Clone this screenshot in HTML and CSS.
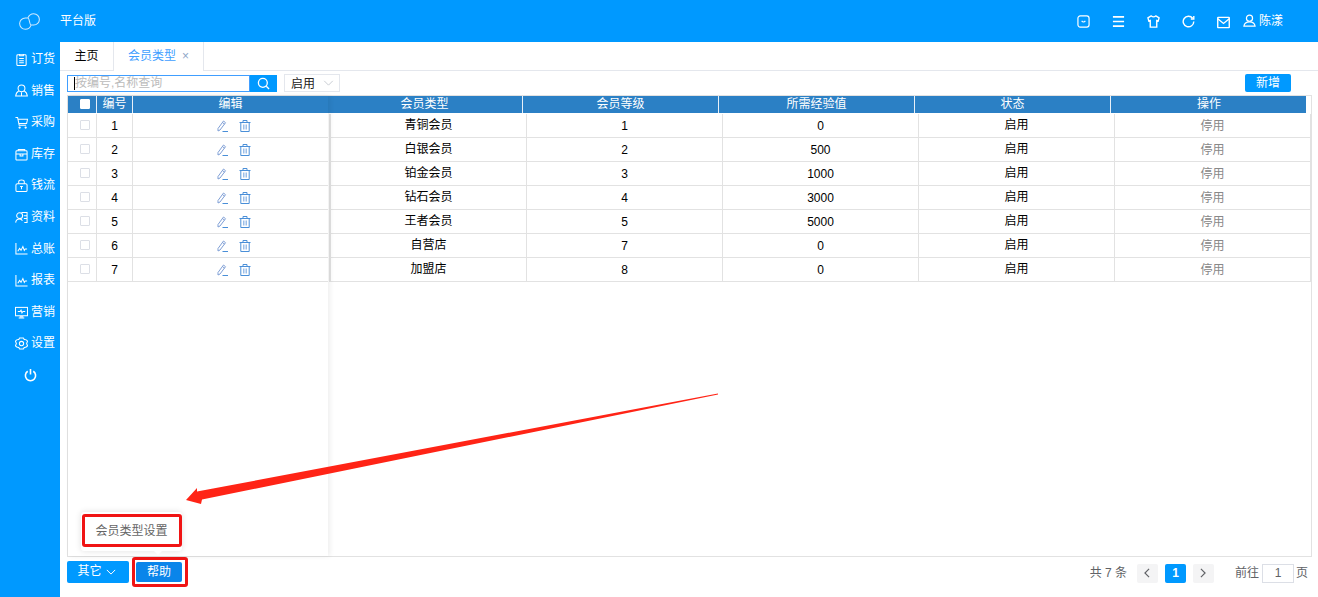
FILE: index.html
```html
<!DOCTYPE html>
<html lang="zh">
<head>
<meta charset="utf-8">
<title>会员类型</title>
<link rel="stylesheet" href="styles.css">
</head>
<body>
<div class="app">
  <header class="topbar">
    <svg class="logo" viewBox="0 0 20 16" fill="none" stroke="currentColor" stroke-width="1"><path d="M8.500 4.600 C9.500 2 11.500 0.600 14 0.600 A5.400 5.400 0 0 1 14 11.400 H11.500 C10.500 14 8.500 15.400 6 15.400 A5.400 5.400 0 0 1 6 4.600 H8.500 C10 4.600 10 11.400 11.500 11.400"/></svg>
    <span class="brand">平台版</span>
    <div class="top-actions">
      <svg class="top-icon" viewBox="0 0 14 14" fill="none" stroke="currentColor" stroke-width="1.300"><rect x="1" y="1" width="12" height="12" rx="2.500"/><path d="M5 6.300 Q7 8.800 9 6.300"/></svg>
      <svg class="top-icon" viewBox="0 0 14 14" fill="none" stroke="currentColor" stroke-width="1.700"><path d="M1 2H13M1 7H13M1 12H13"/></svg>
      <svg class="top-icon" viewBox="0 0 14 14" fill="none" stroke="currentColor" stroke-width="1.500"><path d="M4.500 1 Q7 3 9.500 1 L13 3 L12 6.500 L10.500 6 V13 H3.500 V6 L2 6.500 L1 3 Z"/></svg>
      <svg class="top-icon" viewBox="0 0 14 14" fill="none" stroke="currentColor" stroke-width="1.500"><path d="M11.500 3.500 A5.700 5.700 0 1 0 12.700 7"/><path d="M9.500 4.300 H12.700 V1" /></svg>
      <svg class="top-icon mail" viewBox="0 0 14 14" fill="none" stroke="currentColor" stroke-width="1.500"><rect x="0.800" y="1.500" width="12.400" height="11" rx="0.500"/><path d="M0.800 3 L7 8 L13.200 3"/></svg>
      <span class="user">
        <svg class="user-icon" viewBox="0 0 14 14" fill="none" stroke="currentColor" stroke-width="1.300"><circle cx="7" cy="4.500" r="3.300"/><path d="M1 13 C1.500 9.500 4 8.500 7 8.500 C10 8.500 12.500 9.500 13 13 Z"/></svg>
        <span>陈漾</span>
      </span>
    </div>
  </header>

  <div class="workspace">
    <nav class="sidebar">
      <a class="nav-item"><svg class="nav-icon" viewBox="0 0 14 14" fill="none" stroke="currentColor"><rect x="2" y="2" width="10" height="11.500" rx="1"/><path d="M5 1V3H9V1M4.500 6H9.500M4.500 8.300H9.500M4.500 10.600H9.500"/></svg><span>订货</span></a>
      <a class="nav-item"><svg class="nav-icon" viewBox="0 0 14 14" fill="none" stroke="currentColor"><circle cx="7" cy="4.700" r="3.700"/><path d="M4 7.500 C2 8.500 1 10.500 0.700 13 H13.300 C13 10.500 12 8.500 10 7.500M7 9V13"/></svg><span>销售</span></a>
      <a class="nav-item"><svg class="nav-icon" viewBox="0 0 14 14" fill="none" stroke="currentColor"><path d="M0.500 1.500 H2.800 L4.500 10 H12"/><path d="M3.200 3.500 H13.500 L12.500 8 H4.200"/><circle cx="5" cy="12.500" r="0.700"/><circle cx="11.500" cy="12.500" r="0.700"/></svg><span>采购</span></a>
      <a class="nav-item"><svg class="nav-icon" viewBox="0 0 14 14" fill="none" stroke="currentColor"><rect x="1" y="3" width="12" height="10" rx="1"/><path d="M1 6.500H13M3.500 3V1.500H10.500V3M5.500 6.500V8.500H8.500V6.500"/></svg><span>库存</span></a>
      <a class="nav-item"><svg class="nav-icon" viewBox="0 0 14 14" fill="none" stroke="currentColor"><rect x="1" y="5" width="12" height="8.500" rx="1.500"/><path d="M4 5V3 Q4 1 7 1 Q10 1 10 3V5"/><path d="M7 8V11M5.500 8H8.500"/></svg><span>钱流</span></a>
      <a class="nav-item"><svg class="nav-icon" viewBox="0 0 14 14" fill="none" stroke="currentColor"><circle cx="5" cy="5" r="3.200"/><path d="M0.700 12.500 C1 9.500 3 8.500 5 8.500 C6.500 8.500 7.500 9.300 8 10.500M7 1.500H13V12.500H10M9.500 5H13M9.500 8H13"/></svg><span>资料</span></a>
      <a class="nav-item"><svg class="nav-icon" viewBox="0 0 14 14" fill="none" stroke="currentColor"><path d="M1 1V13H13.500"/><path d="M3 10 L5 7 L6.500 9 L8.500 5 L10 9 L11 7.500 H13"/></svg><span>总账</span></a>
      <a class="nav-item"><svg class="nav-icon" viewBox="0 0 14 14" fill="none" stroke="currentColor"><path d="M1 1V13H13.500"/><path d="M3 10 L5 7 L6.500 9 L8.500 5 L10 9 L11 7.500 H13"/></svg><span>报表</span></a>
      <a class="nav-item"><svg class="nav-icon" viewBox="0 0 14 14" fill="none" stroke="currentColor"><rect x="0.500" y="1.500" width="13" height="9"/><path d="M3 6 H5.500 L6.500 4.500 L7.500 7.500 L8.500 6 H11M4 13H10M5 11.500H9"/></svg><span>营销</span></a>
      <a class="nav-item"><svg class="nav-icon" viewBox="0 0 14 14" fill="none" stroke="currentColor"><path d="M5 1 H9 L10 2.800 Q12 2.500 13.500 4.500 L12.500 7 L13.500 9.500 Q12 11.500 10 11.200 L9 13 H5 L4 11.200 Q2 11.500 0.500 9.500 L1.500 7 L0.500 4.500 Q2 2.500 4 2.800 Z"/><circle cx="7" cy="7" r="2.300"/></svg><span>设置</span></a>
      <a class="nav-item nav-power"><svg class="power-icon" viewBox="0 0 14 14" fill="none" stroke="currentColor" stroke-width="1.700"><path d="M4 3 A5.500 5.500 0 1 0 10 3M7 0.500V6.500"/></svg></a>
    </nav>

    <main class="main">
      <div class="tabs">
        <div class="tab">主页</div>
        <div class="tab tab-active">会员类型<span class="tab-close">×</span></div>
      </div>

      <div class="toolbar">
        <div class="search">
          <div class="search-input"><span class="caret"></span>按编号,名称查询</div>
          <button class="search-btn"><svg class="search-icon" viewBox="0 0 14 14" fill="none" stroke="currentColor" stroke-width="1.400"><circle cx="6.300" cy="6.300" r="4.800"/><path d="M10 10 L13 13"/></svg></button>
        </div>
        <div class="select">启用<svg class="select-arrow" viewBox="0 0 12 7" fill="none" stroke="currentColor"><path d="M1 1 L6 6 L11 1"/></svg></div>
        <button class="add-btn">新增</button>
      </div>

      <div class="table">
        <div class="fixed-pane">
          <div class="fixed-row head">
            <div class="cell check-cell"><span class="check check-head"></span></div>
            <div class="cell">编号</div>
            <div class="cell">编辑</div>
          </div>
          <div class="fixed-row"><div class="cell check-cell"><span class="check"></span></div><div class="cell num-cell">1</div><div class="cell edit-cell"><svg class="op-icon"><use href="#pen"/></svg><svg class="op-icon"><use href="#bin"/></svg></div></div>
          <div class="fixed-row"><div class="cell check-cell"><span class="check"></span></div><div class="cell num-cell">2</div><div class="cell edit-cell"><svg class="op-icon"><use href="#pen"/></svg><svg class="op-icon"><use href="#bin"/></svg></div></div>
          <div class="fixed-row"><div class="cell check-cell"><span class="check"></span></div><div class="cell num-cell">3</div><div class="cell edit-cell"><svg class="op-icon"><use href="#pen"/></svg><svg class="op-icon"><use href="#bin"/></svg></div></div>
          <div class="fixed-row"><div class="cell check-cell"><span class="check"></span></div><div class="cell num-cell">4</div><div class="cell edit-cell"><svg class="op-icon"><use href="#pen"/></svg><svg class="op-icon"><use href="#bin"/></svg></div></div>
          <div class="fixed-row"><div class="cell check-cell"><span class="check"></span></div><div class="cell num-cell">5</div><div class="cell edit-cell"><svg class="op-icon"><use href="#pen"/></svg><svg class="op-icon"><use href="#bin"/></svg></div></div>
          <div class="fixed-row"><div class="cell check-cell"><span class="check"></span></div><div class="cell num-cell">6</div><div class="cell edit-cell"><svg class="op-icon"><use href="#pen"/></svg><svg class="op-icon"><use href="#bin"/></svg></div></div>
          <div class="fixed-row"><div class="cell check-cell"><span class="check"></span></div><div class="cell num-cell">7</div><div class="cell edit-cell"><svg class="op-icon"><use href="#pen"/></svg><svg class="op-icon"><use href="#bin"/></svg></div></div>
        </div>
        <div class="data-pane">
          <div class="data-head">
            <div class="cell">会员类型</div><div class="cell">会员等级</div><div class="cell">所需经验值</div><div class="cell">状态</div><div class="cell">操作</div>
          </div>
          <div class="data-row"><div class="cell">青铜会员</div><div class="cell digit">1</div><div class="cell digit">0</div><div class="cell">启用</div><div class="cell muted">停用</div></div>
          <div class="data-row"><div class="cell">白银会员</div><div class="cell digit">2</div><div class="cell digit">500</div><div class="cell">启用</div><div class="cell muted">停用</div></div>
          <div class="data-row"><div class="cell">铂金会员</div><div class="cell digit">3</div><div class="cell digit">1000</div><div class="cell">启用</div><div class="cell muted">停用</div></div>
          <div class="data-row"><div class="cell">钻石会员</div><div class="cell digit">4</div><div class="cell digit">3000</div><div class="cell">启用</div><div class="cell muted">停用</div></div>
          <div class="data-row"><div class="cell">王者会员</div><div class="cell digit">5</div><div class="cell digit">5000</div><div class="cell">启用</div><div class="cell muted">停用</div></div>
          <div class="data-row"><div class="cell">自营店</div><div class="cell digit">7</div><div class="cell digit">0</div><div class="cell">启用</div><div class="cell muted">停用</div></div>
          <div class="data-row"><div class="cell">加盟店</div><div class="cell digit">8</div><div class="cell digit">0</div><div class="cell">启用</div><div class="cell muted">停用</div></div>
        </div>
      </div>

      <footer class="footer">
        <button class="btn-other">其它<svg class="other-arrow" viewBox="0 0 12 7" fill="none" stroke="currentColor" stroke-width="1.200"><path d="M1 1 L6 6 L11 1"/></svg></button>
        <div class="help-wrap">
          <button class="btn-help">帮助</button>
          <div class="popover">会员类型设置<i class="popover-tip"></i><span class="mark mark-pop"></span></div>
          <span class="mark mark-help"></span>
        </div>
        <div class="pager">
          <span class="total">共 7 条</span>
          <span class="page-btn"><svg class="page-arrow" viewBox="0 0 7 12" fill="none" stroke="currentColor" stroke-width="1.400"><path d="M6 1 L1 6 L6 11"/></svg></span>
          <span class="page-btn page-on">1</span>
          <span class="page-btn"><svg class="page-arrow" viewBox="0 0 7 12" fill="none" stroke="currentColor" stroke-width="1.400"><path d="M1 1 L6 6 L1 11"/></svg></span>
          <span class="goto">前往</span>
          <span class="page-input">1</span>
          <span>页</span>
        </div>
      </footer>
    </main>
  </div>
</div>

<svg class="annotation" viewBox="0 0 1318 597">
  <polygon points="718,393.500 718,394.500 202,499.500 201,504 186,500 197,488 197,491.500" fill="#ff2416"/>
</svg>

<svg class="sprites">
  <symbol id="pen" viewBox="0 0 12 12"><g fill="none" stroke="#7f9fd6" stroke-width="1"><path d="M1 8.500 L6.500 1 L8.500 2.700 L3 10 L1 11 Z"/><path d="M5.500 2.500 L7.500 4.200"/></g><path d="M5.500 11.500H11" stroke="#4a8fd8"/></symbol>
  <symbol id="bin" viewBox="0 0 12 12"><g fill="none" stroke="#4a8fd8" stroke-width="1"><path d="M0.500 2.500H11.500M4 2.500V0.500H8V2.500M1.800 2.500V11.500H10.200V2.500"/><path d="M4.500 4.500V9.500M6 4.500V9.500M7.500 4.500V9.500" stroke="#9dbfe8"/></g></symbol>
</svg>
</body>
</html>
```
FILE: styles.css
```css
* { box-sizing: border-box; }
html, body { margin: 0; height: 100%; overflow: hidden; }
body {
  position: relative;
  font: 12px/1.2 "Liberation Sans", "Noto Sans CJK SC", sans-serif;
  color: #000;
  background: #fff;
}
button { font: inherit; border: 0; padding: 0; }
.app { display: flex; flex-direction: column; height: 597px; }

.topbar { height: 42px; flex: none; display: flex; align-items: center; background: #0099ff; color: #fff; }
.logo { width: 21px; height: 17px; margin-left: 19px; color: #cfeaff; }
.brand { margin-left: 20px; }
.top-actions { margin-left: auto; display: flex; align-items: center; margin-right: 35px; }
.top-icon { width: 13px; height: 13px; margin-right: 22px; }
.mail { margin-right: 13px; margin-top: 3px; }
.user { display: flex; align-items: center; gap: 3px; }
.user-icon { width: 13px; height: 13px; }

.workspace { flex: 1; display: flex; min-height: 0; }
.sidebar { width: 60px; flex: none; background: #0099ff; color: #fff; padding-top: 1.500px; display: flex; flex-direction: column; }
.nav-item { height: 31.6px; display: flex; align-items: center; padding-left: 15px; gap: 3px; }
.nav-icon { width: 13px; height: 13px; stroke-width: 1.100; }
.nav-power { padding-left: 24px; }
.power-icon { width: 13px; height: 14px; }

.main { flex: 1; display: flex; flex-direction: column; min-width: 0; }
.tabs { height: 29px; flex: none; display: flex; padding-left: 2px; border-bottom: 1px solid #e4e7ed; }
.tab { width: 51px; height: 29px; display: flex; align-items: center; justify-content: center; padding-right: 2px; }
.tab-active { width: 91px; padding-right: 0; color: #409eff; background: #fff; border-left: 1px solid #e4e7ed; border-right: 1px solid #e4e7ed; }
.tab-close { margin-left: 6px; font-size: 12px; color: #8fa6c8; }

.toolbar { height: 24px; flex: none; display: flex; align-items: center; padding: 0 27px 0 7px; }
.search { display: flex; height: 17px; }
.search-input { width: 183px; height: 17px; border: 1px solid #409eff; color: #bbb; display: flex; align-items: center; padding: 1px 0 0 7px; background: #fff; }
.caret { width: 1px; height: 13px; background: #000; margin-left: -1px; }
.search-btn { width: 27px; height: 17px; background: #0099ff; color: #fff; display: flex; align-items: center; justify-content: center; }
.search-icon { width: 13px; height: 13px; }
.select { margin-left: 7px; width: 56px; height: 18px; border: 1px solid #e4e7ed; display: flex; align-items: center; padding: 2px 0 0 6px; color: #222; }
.select-arrow { width: 11px; height: 6px; margin: -2px 0 0 8px; color: #c0c4cc; }
.add-btn { margin-left: auto; width: 46px; height: 18px; background: #0099ff; color: #fff; border-radius: 2px; }

.table { flex: none; height: 462px; margin: 0 6px 0 7px; border: 1px solid #e2e2e2; display: flex; }
.fixed-pane { width: 260px; flex: none; background: #fff; box-shadow: 2px 0 5px rgba(0, 0, 0, .07); position: relative; z-index: 1; }
.fixed-row { display: grid; grid-template-columns: 29px 36px 195px; height: 24px; border-bottom: 1px solid #e2e2e2; }
.fixed-row .cell { border-right: 1px solid #e2e2e2; }
.fixed-row .cell:last-child { border-right: 0; }
.fixed-row.head { height: 17px; margin-bottom: 1px; border-bottom: 0; background: #2b80c5; color: #fff; }
.fixed-row.head .cell { border-right-color: #e8f0f8; }
.cell { display: flex; align-items: center; justify-content: center; }
.check-cell { padding: 0 0 1px 6px; }
.num-cell { padding-top: 2px; }
.check { width: 10px; height: 10px; border: 1px solid #dcdfe6; border-radius: 1px; background: #fff; }
.check-head { border-color: #fff; }
.edit-cell { gap: 10px; padding: 0 2px 0 8px; }
.op-icon { width: 12px; height: 12px; }

.data-pane { flex: 1; min-width: 0; }
.data-head { display: grid; grid-template-columns: repeat(5, 196px); height: 17px; margin: 0 0 1px -1px; background: #2b80c5; color: #fff; width: 979px; }
.data-head .cell { border-right: 1px solid #e8f0f8; }
.data-head .cell:last-child { border-right: 0; }
.data-row { display: grid; grid-template-columns: repeat(5, 196px); height: 24px; margin-left: 1px; border-left: 2px solid #e2e2e2; border-bottom: 1px solid #e2e2e2; }
.data-row .cell { border-right: 1px solid #e2e2e2; }
.digit { padding-top: 2px; }
.muted { color: #888; padding-top: 2px; }

.footer { flex: 1; display: flex; align-items: flex-start; padding: 4px 10px 0 7px; }
.btn-other { width: 62px; height: 22px; padding: 0 3px 1px 0; background: #0099ff; color: #fff; border-radius: 2px; display: flex; align-items: center; justify-content: center; gap: 4px; }
.other-arrow { width: 10px; height: 6px; }
.help-wrap { position: relative; margin-left: 7px; margin-top: 1px; }
.btn-help { display: block; width: 46px; height: 20px; background: #0a85ea; color: #fff; border-radius: 2px; }
.popover { position: absolute; z-index: 3; left: -55px; bottom: 31px; width: 101px; height: 39px; background: #fff; border-radius: 3px; box-shadow: 0 0 6px rgba(0, 0, 0, .12); color: #666; display: flex; align-items: center; justify-content: center; white-space: nowrap; }
.popover-tip { position: absolute; left: 73px; top: 100%; border: 4px solid transparent; border-top-color: #fff; }
.mark { position: absolute; border: 3px solid #f01414; border-radius: 3px; }
.mark-pop { left: 1px; top: 2px; width: 100px; height: 33px; }
.mark-help { left: -4px; top: -5px; width: 56px; height: 30px; }

.pager { margin-left: auto; display: flex; align-items: center; height: 20px; margin-top: 2px; color: #606266; }
.total { margin-right: 10px; }
.page-btn { width: 21px; height: 19px; background: #f4f4f5; border-radius: 2px; display: flex; align-items: center; justify-content: center; margin-right: 7px; font-weight: 700; }
.page-on { background: #0099ff; color: #fff; }
.page-arrow { width: 6px; height: 10px; }
.goto { margin-left: 14px; margin-right: 3px; }
.page-input { width: 32px; height: 19px; border: 1px solid #dcdfe6; display: flex; align-items: center; justify-content: center; margin-right: 2px; }

.annotation { position: absolute; left: 0; top: 0; width: 1318px; height: 597px; pointer-events: none; z-index: 5; }
.sprites { position: absolute; width: 0; height: 0; }
```
